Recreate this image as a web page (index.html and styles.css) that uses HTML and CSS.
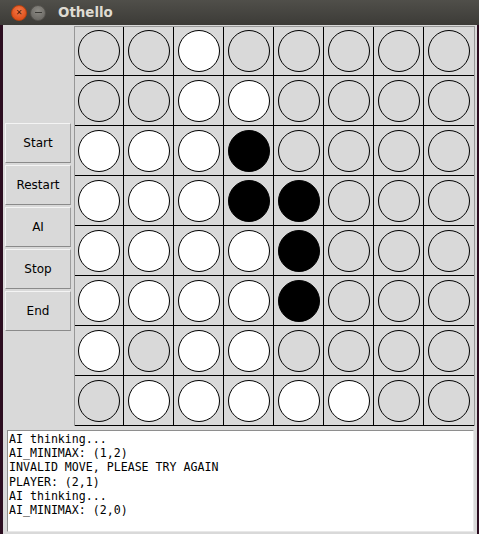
FILE: index.html
```html
<!DOCTYPE html>
<html>
<head>
<meta charset="utf-8">
<title>Othello</title>
<link rel="stylesheet" href="styles.css">
</head>
<body>
<div class="titlebar">
  <span class="tb-btn tb-close">&#x2715;</span>
  <span class="tb-btn tb-min"><span class="dash"></span></span>
  <span class="title">Othello</span>
</div>
<div class="window">
  <div class="main">
    <div class="side">
      <div class="btn">Start</div>
      <div class="btn">Restart</div>
      <div class="btn">AI</div>
      <div class="btn">Stop</div>
      <div class="btn">End</div>
    </div>
    <div class="board" id="board"></div>
  </div>
  <div class="log">AI thinking...
AI_MINIMAX: (1,2)
INVALID MOVE, PLEASE TRY AGAIN
PLAYER: (2,1)
AI thinking...
AI_MINIMAX: (2,0)</div>
</div>
<script src="board.js"></script>
</body>
</html>
```
FILE: board.js
```js
var rows = [
  "..W.....",
  "..WW....",
  "WWWB....",
  "WWWBB...",
  "WWWWB...",
  "WWWWB...",
  "W.WW....",
  ".WWWWW.."
];
var board = document.getElementById("board");
rows.forEach(function (r) {
  for (var i = 0; i < 8; i++) {
    var cell = document.createElement("div");
    cell.className = "cell";
    var disc = document.createElement("div");
    var c = r[i];
    disc.className = "disc" + (c === "W" ? " white" : c === "B" ? " black" : "");
    cell.appendChild(disc);
    board.appendChild(cell);
  }
});
```
FILE: styles.css
```css
html, body {
  margin: 0;
  padding: 0;
}
body {
  width: 479px;
  height: 534px;
  overflow: hidden;
  background: #2c0d20;
  font-family: "DejaVu Sans", sans-serif;
}
.titlebar {
  height: 25px;
  background: linear-gradient(#504f4a, #3c3b37);
  display: flex;
  align-items: center;
}
.tb-btn {
  width: 16px;
  height: 16px;
  border-radius: 50%;
  box-sizing: border-box;
  display: flex;
  align-items: center;
  justify-content: center;
}
.tb-close {
  margin-left: 11px;
  background: radial-gradient(circle at 50% 35%, #f47a4a, #e0521e 70%);
  border: 1px solid #b8420f;
  color: #4a1a08;
  font-size: 8px;
  font-weight: bold;
  line-height: 1;
}
.tb-min {
  margin-left: 3px;
  background: radial-gradient(circle at 50% 35%, #8d8b85, #6f6d68 70%);
  border: 1px solid #55534e;
}
.dash {
  width: 7px;
  height: 1px;
  background: #3a3935;
}
.title {
  margin-left: 12px;
  color: #dfdbd2;
  font-family: "DejaVu Sans", sans-serif;
  font-weight: bold;
  font-size: 13.4px;
  line-height: 1;
}
.window {
  margin-left: 3px;
  width: 474px;
  height: 509px;
  background: #d9d9d9;
}
.main {
  display: flex;
  padding-top: 1px;
}
.side {
  width: 71px;
  display: flex;
  flex-direction: column;
  justify-content: center;
  gap: 2px;
  padding-left: 2px;
  padding-top: 2px;
  box-sizing: border-box;
}
.btn {
  width: 66px;
  height: 40px;
  box-sizing: border-box;
  border: 1px solid;
  border-color: #f4f4f4 #9c9c9c #8a8a8a #f4f4f4;
  background: #d9d9d9;
  display: flex;
  align-items: center;
  justify-content: center;
  font-size: 12px;
  color: #000;
}
.board {
  display: grid;
  grid-template-columns: 49px repeat(7, 50px);
  grid-template-rows: 49px repeat(7, 50px);
  border: 1px solid #979797;
  border-bottom: none;
  background: #d9d9d9;
}
.cell {
  box-sizing: border-box;
  border-right: 1px solid #000;
  border-bottom: 1px solid #000;
  display: flex;
  align-items: center;
  justify-content: center;
}
.cell:nth-child(8n) {
  border-right: none;
}
.disc {
  width: 42px;
  height: 42px;
  box-sizing: border-box;
  border-radius: 50%;
  border: 1px solid #000;
  background: #d9d9d9;
}
.disc.white {
  background: #fff;
}
.disc.black {
  background: #000;
}
.log {
  margin: 4px 0 0 4px;
  width: 467px;
  height: 102px;
  box-sizing: border-box;
  background: #fff;
  border: 1px solid;
  border-color: #8e8e8e #e8e8e8 #e8e8e8 #8e8e8e;
  padding: 1px 1px;
  font-family: "DejaVu Sans Mono", monospace;
  font-size: 11.6px;
  line-height: 14.2px;
  white-space: pre;
  color: #000;
}
```
